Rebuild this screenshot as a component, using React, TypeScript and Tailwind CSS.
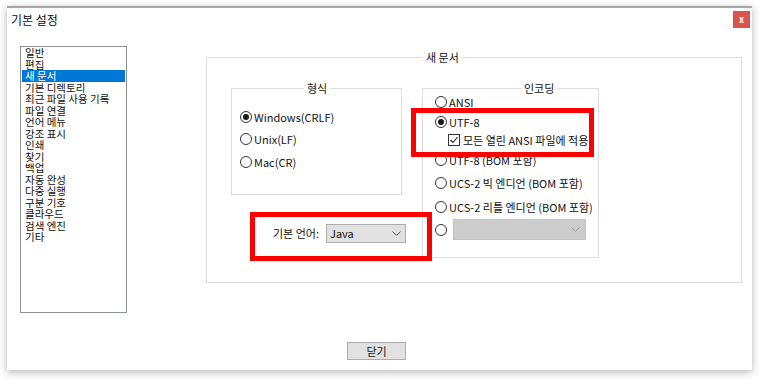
import React from "react";

const menuItems = [
  "일반",
  "편집",
  "새 문서",
  "기본 디렉토리",
  "최근 파일 사용 기록",
  "파일 연결",
  "언어 메뉴",
  "강조 표시",
  "인쇄",
  "찾기",
  "백업",
  "자동 완성",
  "다중 실행",
  "구분 기호",
  "클라우드",
  "검색 엔진",
  "기타",
];

function Radio({ checked = false }: { checked?: boolean }) {
  return (
    <span className="w-[12px] h-[12px] rounded-full border border-[#333333] bg-white flex items-center justify-center shrink-0">
      {checked && <span className="w-[6px] h-[6px] rounded-full bg-[#1a1a1a]" />}
    </span>
  );
}

function Chevron({ color }: { color: string }) {
  return (
    <svg width="9" height="5" viewBox="0 0 9 5" className="shrink-0">
      <polyline points="0.5,0.5 4.5,4.5 8.5,0.5" fill="none" stroke={color} strokeWidth="1" />
    </svg>
  );
}

function RadioRow({ label, checked, className = "" }: { label: string; checked?: boolean; className?: string }) {
  return (
    <div className={`flex items-center gap-[2px] h-[16px] whitespace-nowrap ${className}`}>
      <Radio checked={checked} />
      <span className="leading-[16px]">{label}</span>
    </div>
  );
}

export default function App() {
  return (
    <div className="w-[763px] h-[381px] bg-white pl-[7px] pt-[6px] font-['Noto_Sans_CJK_KR',sans-serif] text-[11px] text-[#111111]">
      <div className="w-[745px] h-[364px] bg-white border-t-2 border-[#a6a6a6] shadow-[0_2px_8px_rgba(0,0,0,0.3)] flex flex-col">
        {/* Title bar */}
        <div className="flex items-center justify-between pl-[4px] pr-[2px] pt-[3px]">
          <span className="text-[12px] leading-[17px]">기본 설정</span>
          <button className="w-[17px] h-[17px] bg-[#d9534f] text-white text-[9px] font-bold leading-none flex items-center justify-center">
            x
          </button>
        </div>

        {/* Body */}
        <div className="flex items-start mt-[18px] ml-[13px]">
          {/* Category list */}
          <div className="w-[107px] h-[267px] border border-[#8c8f94] px-[1px] text-[10.5px]">
            {menuItems.map((item) => (
              <div
                key={item}
                className={`h-[11.5px] leading-[11.5px] pl-[3px] whitespace-nowrap ${
                  item === "새 문서" ? "bg-[#0078d7] text-white" : ""
                }`}
              >
                {item}
              </div>
            ))}
          </div>

          {/* 새 문서 */}
          <fieldset className="ml-[79px] mt-[5px] w-[536px] h-[232px] border border-[#dcdcdc]">
            <legend className="ml-[216px] px-[3px] leading-[12px]">새 문서</legend>
            <div className="flex items-start pl-[24px] pt-[19px]">
              {/* Left column */}
              <div className="w-[171px] flex flex-col">
                <fieldset className="w-[171px] h-[113px] border border-[#dcdcdc]">
                  <legend className="ml-[72px] px-[3px] leading-[12px]">형식</legend>
                  <div className="flex flex-col pl-[8px] pt-[15px]">
                    <RadioRow label="Windows(CRLF)" checked />
                    <RadioRow label="Unix(LF)" className="mt-[6px]" />
                    <RadioRow label="Mac(CR)" className="mt-[7px]" />
                  </div>
                </fieldset>

                <div className="relative flex items-center h-[19px] mt-[29px] pl-[42px] whitespace-nowrap">
                  <span className="leading-[19px]">기본 언어:</span>
                  <div className="ml-[7px] w-[80px] h-[19px] shrink-0 bg-[#e1e1e1] border border-[#adadad] flex items-center justify-between pl-[3px] pr-[4px]">
                    <span className="leading-[17px]">Java</span>
                    <Chevron color="#555555" />
                  </div>
                  <div className="absolute left-[19px] top-[-12px] w-[182px] h-[49px] border-[5px] border-[#ff0000]" />
                </div>
              </div>

              {/* 인코딩 */}
              <fieldset className="ml-[20px] w-[177px] h-[176px] border border-[#dcdcdc]">
                <legend className="ml-[98px] px-[3px] leading-[12px]">인코딩</legend>
                <div className="relative flex flex-col pl-[12px]">
                  <RadioRow label="ANSI" />
                  <RadioRow label="UTF-8" checked className="mt-[4px]" />
                  <div className="flex items-center gap-[3px] h-[16px] mt-[2px] pl-[13px] whitespace-nowrap">
                    <span className="w-[12px] h-[12px] border border-[#333333] bg-white flex items-center justify-center shrink-0">
                      <svg width="10" height="10" viewBox="0 0 10 10">
                        <polyline points="1.5,5 4,7.5 8.5,2" fill="none" stroke="#222222" strokeWidth="1.1" />
                      </svg>
                    </span>
                    <span className="leading-[16px]">모든 열린 ANSI 파일에 적용</span>
                  </div>
                  <RadioRow label="UTF-8 (BOM 포함)" className="mt-[4px]" />
                  <RadioRow label="UCS-2 빅 엔디언 (BOM 포함)" className="mt-[7px]" />
                  <RadioRow label="UCS-2 리틀 엔디언 (BOM 포함)" className="mt-[8px]" />
                  <div className="flex items-center gap-[6px] h-[21px] mt-[4px]">
                    <Radio />
                    <div className="w-[133px] h-[21px] bg-[#cccccc] border border-[#c4c4c4] flex items-center justify-end pr-[5px]">
                      <Chevron color="#a8a8a8" />
                    </div>
                  </div>
                  <div className="absolute left-[-12px] top-[14px] w-[183px] h-[49px] border-[5px] border-[#ff0000]" />
                </div>
              </fieldset>
            </div>
          </fieldset>
        </div>

        {/* Footer */}
        <div className="flex pl-[340px] mt-[29px]">
          <button className="w-[59px] h-[18px] bg-[#e1e1e1] border border-[#adadad] text-[11px] leading-[16px]">
            닫기
          </button>
        </div>
      </div>
    </div>
  );
}
